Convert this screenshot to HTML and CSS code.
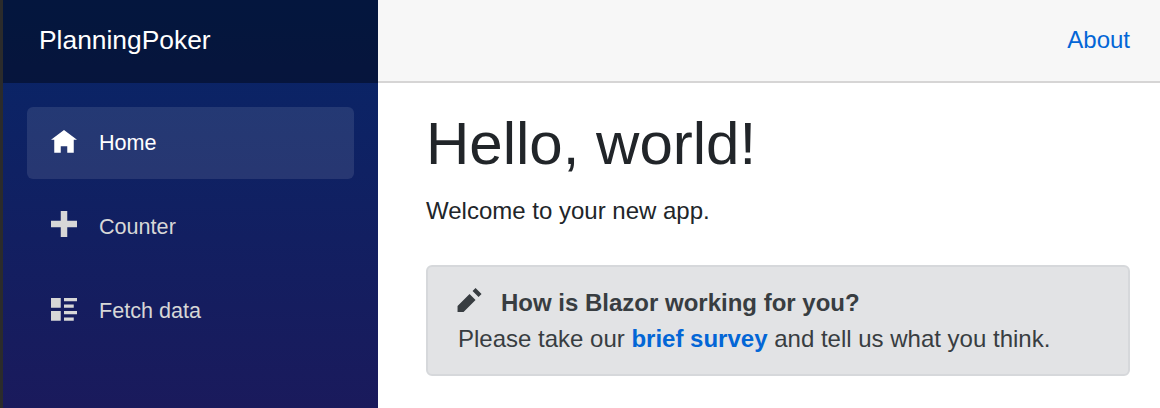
FILE: index.html
```html
<!DOCTYPE html>
<html lang="en">
<head>
<meta charset="utf-8">
<title>PlanningPoker</title>
<link rel="stylesheet" href="styles.css">
</head>
<body>
<div class="page">
  <aside class="sidebar">
    <div class="brand-row"><a class="brand" href="#">PlanningPoker</a></div>
    <nav class="nav">
      <a class="nav-link active" href="#">
        <svg class="nav-icon" viewBox="0 0 8 8"><path d="M4 0l-4 3h1v4h2v-2h2v2h2v-4.03l1 .03-4-3z"/></svg>
        <span>Home</span>
      </a>
      <a class="nav-link" href="#">
        <svg class="nav-icon" viewBox="0 0.9 8 8"><path d="M3 0v3h-3v2h3v3h2v-3h3v-2h-3v-3h-2z"/></svg>
        <span>Counter</span>
      </a>
      <a class="nav-link" href="#">
        <svg class="nav-icon" viewBox="0 0 8 8"><path d="M0 0v3h3v-3h-3zm4 0v1h4v-1h-4zm0 2v1h3v-1h-3zm-4 2v3h3v-3h-3zm4 0v1h4v-1h-4zm0 2v1h3v-1h-3z"/></svg>
        <span>Fetch data</span>
      </a>
    </nav>
  </aside>
  <div class="main">
    <header class="top-row"><a class="about" href="#">About</a></header>
    <main class="content">
      <h1 class="title">Hello, world!</h1>
      <p class="welcome">Welcome to your new app.</p>
      <div class="alert">
        <div class="alert-head">
          <svg class="pencil" viewBox="0.15 1 8 8"><path d="M6 0l-1 1 2 2 1-1-2-2zm-2 2l-4 4v2h2l4-4-2-2z"/></svg>
          <strong>How is Blazor working for you?</strong>
        </div>
        <div>Please take our <a class="survey" href="#">brief survey</a> and tell us what you think.</div>
      </div>
    </main>
  </div>
</div>
</body>
</html>
```
FILE: styles.css
```css
* { box-sizing: border-box; }
html, body { margin: 0; height: 100%; overflow: hidden; }
body {
  font-family: "Liberation Sans", Arial, sans-serif;
  font-size: 24px;
  line-height: 36px;
  color: #212529;
  background: #fff;
}
a { text-decoration: none; }
.page { display: flex; height: 408px; border-left: 3px solid #2b2b2b; }
.sidebar {
  width: 375px;
  flex: none;
  background: linear-gradient(180deg, #072668 0%, #1a1a5c 100%);
}
.brand-row {
  height: 83px;
  background: rgba(0, 0, 0, 0.4);
  display: flex;
  align-items: center;
  padding: 0 0 3px 36px;
}
.brand { color: #fff; font-size: 26.4px; line-height: 36px; }
.nav { padding: 24px 24px 0; display: flex; flex-direction: column; gap: 12px; }
.nav-link {
  height: 72px;
  display: flex;
  align-items: center;
  padding-left: 24px;
  border-radius: 6px;
  color: #d7d7d7;
  font-size: 21.6px;
  line-height: 36px;
}
.nav-link.active { background: rgba(255, 255, 255, 0.1); color: #fff; }
.nav-icon { width: 26px; height: 26px; margin-right: 22px; fill: currentColor; overflow: visible; flex: none; }
.main { flex: 1; min-width: 0; }
.top-row {
  height: 83px;
  background: #f7f7f7;
  border-bottom: 2px solid #d6d5d5;
  display: flex;
  align-items: center;
  justify-content: flex-end;
  padding: 0 30px 2px 0;
}
.about { color: #0366d6; }
.content { padding: 25px 30px 0 48px; }
.title { margin: 0 0 13px; font-size: 60px; line-height: 72px; font-weight: 400; }
.welcome { margin: 0 0 36px; }
.alert {
  height: 111px;
  padding: 18px 30px;
  background: #e2e3e5;
  border: 2px solid #d6d8db;
  border-radius: 6px;
  color: #383d41;
}
.alert-head { display: flex; align-items: center; height: 36px; }
.pencil { width: 24px; height: 24px; margin-right: 19px; fill: currentColor; overflow: visible; flex: none; }
.survey { color: #0366d6; font-weight: 700; }
```
